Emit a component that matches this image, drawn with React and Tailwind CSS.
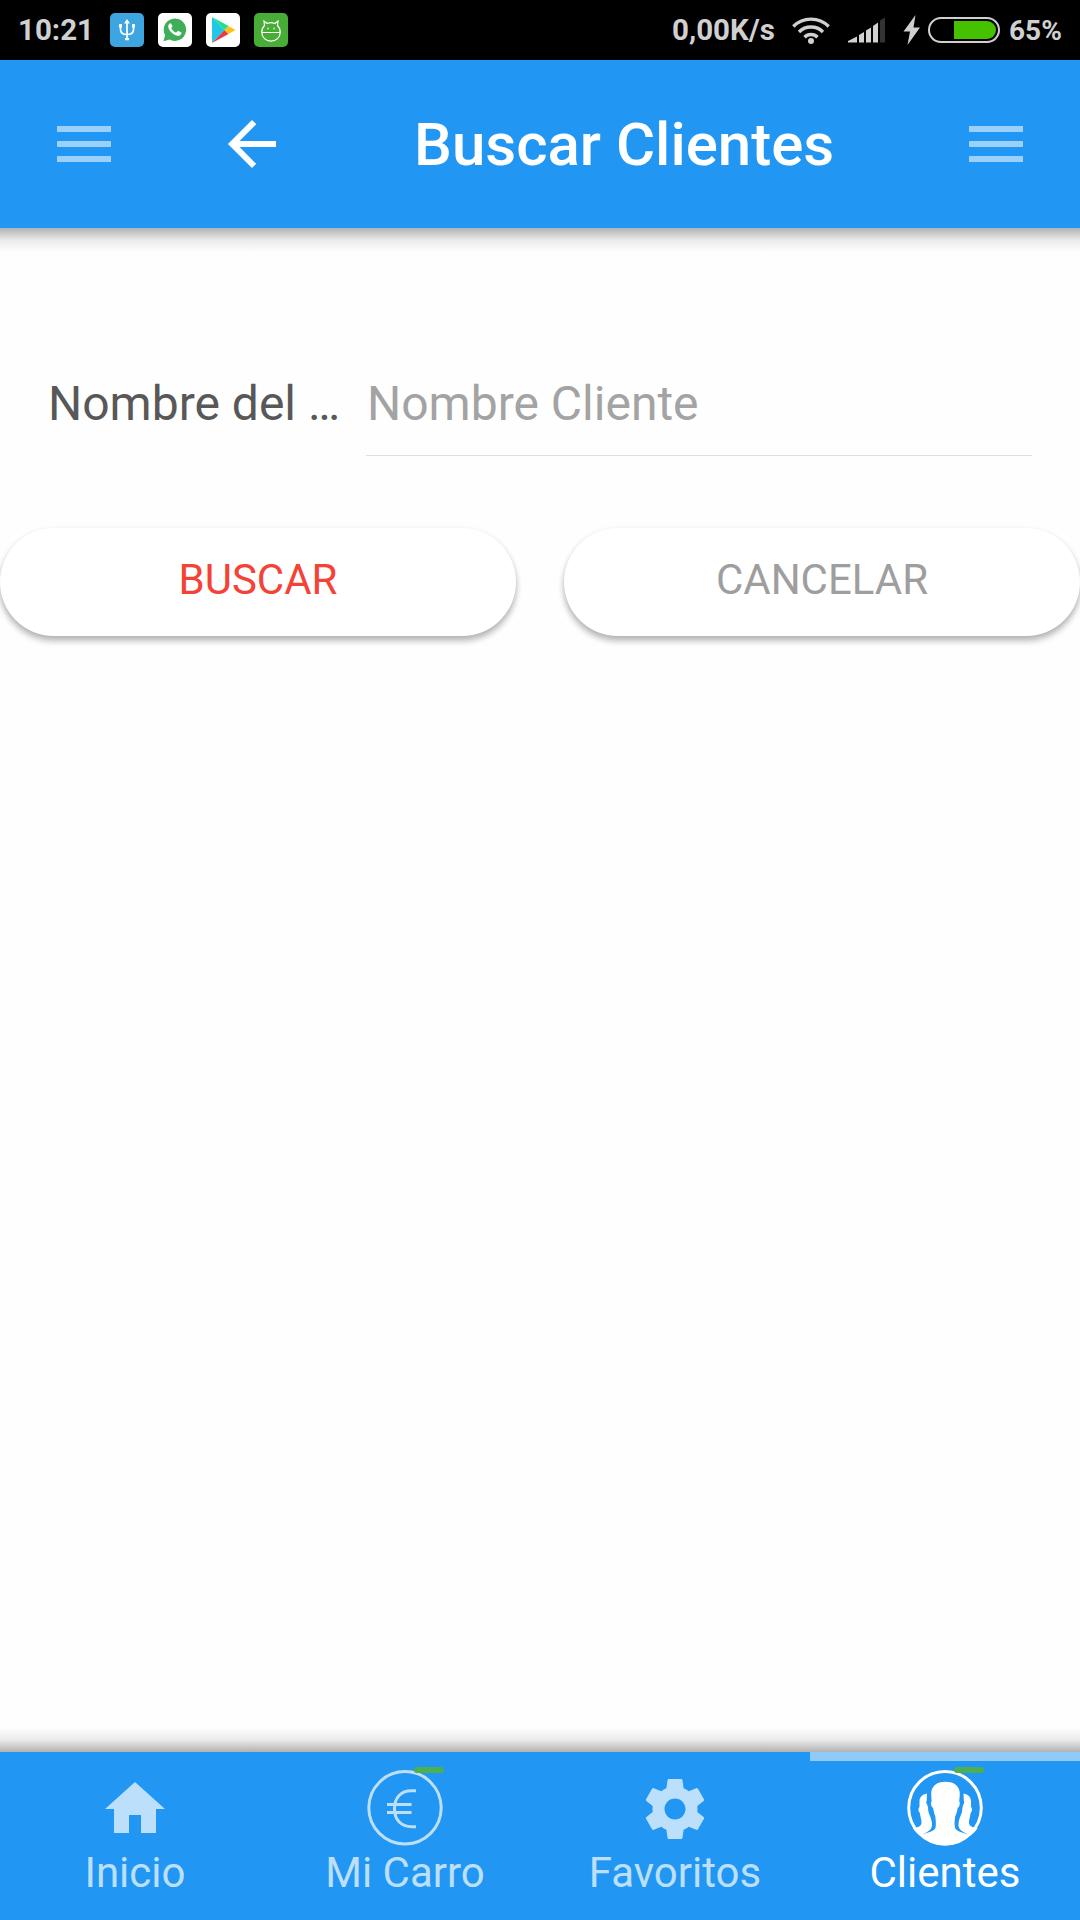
import React, { useState } from 'react';

const ROBOTO = "font-['Roboto',sans-serif]";

const StatusBar = () => (
  <div className="h-[60px] bg-black flex items-center justify-between pl-[18px] pr-[19px] text-[#d0d0d0] text-[29.5px] font-bold">
    <div className="flex items-center">
      <span className="w-[92px] leading-none pt-px">10:21</span>

      {/* Notification icons */}
      <div className="flex items-center gap-[14px]">
        <svg className="w-[34px] h-[34px]" viewBox="0 0 34 34" fill="none" stroke="#fff" strokeWidth="1.7">
          <rect width="34" height="34" rx="5" fill="#3da5e0" stroke="none" />
          <path d="M17 9v17M10.500 13v3.500c0 3.500 3 5 6.500 5s6.500-1.500 6.500-5V13" />
          <path d="M17 6l3 4.500h-6zM9 11h3v3.500H9zM22 11h3v3.500h-3zM15 25h4v2.300h-4z" fill="#fff" stroke="none" />
        </svg>
        <svg className="w-[34px] h-[34px]" viewBox="0 0 34 34">
          <rect width="34" height="34" rx="5" fill="#fff" />
          <path d="M5.500 28.300l1.600-6.200A11.200 11.200 0 1 1 11.500 26.500z" fill="#3fae5a" />
          <path d="M12.700 10.200c-.6-.1-2.700 1-2.500 3.400.4 4.400 5.800 9.300 10.200 9.300 1.800 0 3.300-1.700 3-3.300l-3.400-1.800c-.7.3-1.200 1.800-1.900 1.800-2-.6-4.200-2.700-4.800-4.600.1-.7 1.300-1.200 1.200-1.900z" fill="#fff" />
        </svg>
        <svg className="w-[34px] h-[34px]" viewBox="0 0 34 34">
          <rect width="34" height="34" rx="5" fill="#fff" />
          <path d="M6 4v26L18.500 17z" fill="#1fc8e8" />
          <path d="M6 4l12.500 13 4-4z" fill="#1fe08a" />
          <path d="M6 30l12.500-13 4 4z" fill="#e8394a" />
          <path d="M22.500 13l7 4-7 4-4-4z" fill="#fcc21b" />
        </svg>
        <svg className="w-[34px] h-[34px]" viewBox="0 0 34 34" fill="none" stroke="#fff" strokeWidth="1.200">
          <rect width="34" height="34" rx="5" fill="#48ad36" stroke="none" />
          <path d="M10.500 12.500L10 8l3.200 2.500a10 10 0 0 1 7.600 0L24 8l-.5 4.500c2 2 2.900 4.500 2.700 7a9.200 8.700 0 0 1-18.400 0c-.2-2.500.7-5 2.700-7zM8 19.500h18" />
          <path d="M13.300 15.500h1.300M19.400 15.500h1.300" strokeWidth="1.600" />
        </svg>
      </div>
    </div>

    <div className="flex items-center">
      <span className="w-[119px] leading-none whitespace-nowrap pt-px">0,00K/s</span>
      <svg className="w-[40px] h-[30px]" viewBox="0 0 40 30" fill="none" stroke="#d0d0d0" strokeWidth="3.400">
        <path d="M2.300 11.500a25 25 0 0 1 35.400 0M8 17a17 17 0 0 1 24 0M13.500 22.200a9.200 9.200 0 0 1 13 0" />
        <circle cx="20" cy="26" r="3" fill="#d0d0d0" stroke="none" />
      </svg>
      <svg className="ml-[17px] w-[38px] h-[26px]" viewBox="0 0 38 26" fill="#d0d0d0">
        <path d="M0 25.500v-1.500l9-4.500v6zM11 25.500v-7.500l5-3v10.500zM18 25.500V13.500l5-3v15zM25 25.500V9l5-3.500v20z" />
        <path d="M32 25.500V3.500l5-3v25z" fill="#333" />
      </svg>
      <svg className="ml-[17px] w-[18px] h-[30px]" viewBox="0 0 18 30" fill="#d0d0d0">
        <path d="M12.500 0L.5 16.500h6.500L4.500 30l12.500-17.500h-6.500z" />
      </svg>
      <div className="ml-[7px] w-[72px] h-[26px] rounded-full border-2 border-[#d0d0d0] p-0.5 flex justify-end">
        <div className="w-[42px] h-full bg-[#46c100] rounded-r-full" />
      </div>
      <span className="ml-[9px] w-[52px] leading-none text-[28px] pt-px">65%</span>
    </div>
  </div>
);

const MenuIcon = () => (
  <svg className="w-[72px] h-[72px] text-white/55" viewBox="0 0 512 512" fill="currentColor">
    <path d="M64 384h384v-42.666H64V384zm0-106.666h384v-42.667H64v42.667zM64 128v42.665h384V128H64z" />
  </svg>
);

const Header = () => (
  <header className="h-[168px] bg-[#2196f3] text-white flex items-center px-12">
    <button><MenuIcon /></button>
    <button className="ml-24">
      <svg className="w-[72px] h-[72px]" viewBox="0 0 512 512" fill="currentColor">
        <path d="M427 234.625H167.296l119.702-119.702L256 85 85 256l171 171 29.922-29.924-118.626-119.701H427v-42.750z" />
      </svg>
    </button>
    <h1 className="flex-1 pl-[126px] pt-0.5 text-[60px] leading-none font-medium whitespace-nowrap">Buscar Clientes</h1>
    <button><MenuIcon /></button>
  </header>
);

const HomeIcon = () => (
  <svg className="w-[72px] h-[72px] mt-0.5" viewBox="0 0 24 24" fill="currentColor">
    <path d="M10 20v-6h4v6h5v-8h3L12 3 2 12h3v8z" />
  </svg>
);

const EuroIcon = () => (
  <svg className="w-[76px] h-[76px]" viewBox="0 0 76 76" fill="none" stroke="currentColor" strokeWidth="3">
    <circle cx="38" cy="37.800" r="36.200" />
    <path d="M49 20.700h-4.500c-10.500 0-17 7-17 18s6.500 18 17 18H49M20 34.600h24.500M20 42.600h24.500" />
  </svg>
);

const SettingsIcon = () => (
  <svg className="w-[72px] h-[72px] mt-0.5" viewBox="0 0 24 24" fill="currentColor">
    <path d="M19.430 12.980c.04-.32.07-.64.07-.98s-.03-.66-.07-.98l2.110-1.650c.19-.15.24-.42.12-.64l-2-3.460c-.12-.22-.39-.3-.61-.22l-2.490 1c-.52-.4-1.080-.73-1.690-.98l-.38-2.650C14.460 2.180 14.250 2 14 2h-4c-.25 0-.46.18-.49.42l-.38 2.650c-.61.25-1.170.59-1.690.98l-2.490-1c-.23-.09-.49 0-.61.22l-2 3.460c-.13.22-.07.49.12.64l2.110 1.650c-.04.32-.07.65-.07.98s.03.66.07.98l-2.110 1.650c-.19.15-.24.42-.12.64l2 3.460c.12.22.39.3.61.22l2.490-1c.52.4 1.080.73 1.690.98l.38 2.650c.03.24.24.42.49.42h4c.25 0 .46-.18.49-.42l.38-2.650c.61-.25 1.170-.59 1.690-.98l2.490 1c.23.09.49 0 .61-.22l2-3.460c.12-.22.07-.49-.12-.64l-2.110-1.650zM12 15.500c-1.930 0-3.500-1.570-3.500-3.500s1.570-3.500 3.500-3.500 3.500 1.570 3.500 3.500-1.570 3.500-3.500 3.500z" />
  </svg>
);

// left person of the group, mirrored for the right one
const SIDE_PERSON = 'M20 23.500C15 24.500 12.700 27 12.500 31v6c-1.500.8-1.200 5 .2 5.500L14 49c1.200 4 .5 7.500-4.500 8.500L6 58c1.500 3 4.500 5.800 7.500 7.500 5.500-2.800 12.300-5 11.500-12-.4-4.500-2-7.500-3.200-10.500-1-3-.3-5.500-1.500-8-1.300-2-1.200-3.500-.6-4.500z';

const ContactsIcon = () => (
  <svg className="w-[76px] h-[76px]" viewBox="0 0 76 76" fill="currentColor">
    <circle cx="38" cy="37.800" r="36.300" fill="none" stroke="currentColor" strokeWidth="3" />
    <path d="M38.500 11.800c-9 0-14.300 4.500-14.300 12 0 3 .4 5 .4 7.500-1.200 1.500-.4 6 1.500 6.500.6 4 1.300 6.500 2.200 8.500.4 4.500 1 8 .2 11.500-1.500 4.200-9 4.700-15 7.700C19 71 28 75.500 38 75.500s19-4.500 24.500-10c-6-3-13-3.500-14.500-7.700-.8-3.500-.4-7 .2-11.500 1-2 2-4.500 2.500-8.500 2-.5 2.700-5 1.500-6.500.2-2.500.6-4.500.6-7.500 0-7.500-5.300-12-14.300-12z" />
    <path d={SIDE_PERSON} />
    <path d={SIDE_PERSON} transform="translate(76.500 0) scale(-1 1)" />
  </svg>
);

const Footer = ({ active, setActive }) => {
  const tabs = [
    { id: 'inicio', title: 'Inicio', icon: <HomeIcon /> },
    { id: 'carro', title: 'Mi Carro', icon: <EuroIcon />, badge: true },
    { id: 'favoritos', title: 'Favoritos', icon: <SettingsIcon /> },
    { id: 'clientes', title: 'Clientes', icon: <ContactsIcon />, badge: true }
  ];

  return (
    <nav className="h-[168px] bg-[#2196f3] grid grid-cols-4">
      {tabs.map(tab => (
        <button
          key={tab.id}
          onClick={() => setActive(tab.id)}
          className={`flex flex-col items-center border-t-[9px] ${active === tab.id ? 'border-[#90caf9] text-white' : 'border-transparent text-[#bce0fb]'}`}
        >
          <span className="relative h-[76px] mt-[9px] flex items-center justify-center">
            {tab.icon}
            {tab.badge && <span className="absolute -top-[3px] right-[-1px] w-[30px] h-[6px] rounded-sm bg-[#4caf50]" />}
          </span>
          <span className="mt-[2px] text-[42px] leading-[50px]">{tab.title}</span>
        </button>
      ))}
    </nav>
  );
};

const App = () => {
  const [active, setActive] = useState('clientes');
  const [name, setName] = useState('');

  return (
    <div className={`w-[1080px] h-[1920px] bg-white flex flex-col overflow-hidden ${ROBOTO}`}>
      <StatusBar />
      <Header />

      <main className="flex-1 flex flex-col bg-[#fefefe]">
        <div className="h-6 bg-linear-to-b from-black/30 via-black/8 to-transparent" />

        {/* Search field */}
        <div className="mt-[84px] ml-12 mr-12 flex h-[120px]">
          <label className="w-[294px] mr-6 pt-[40px] text-[48px] leading-[56px] text-[#585858] whitespace-nowrap">Nombre del …</label>
          <div className="flex-1 border-b border-[#dedede]">
            <input
              value={name}
              onChange={e => setName(e.target.value)}
              placeholder="Nombre Cliente"
              className="w-full mt-[40px] h-[56px] pl-px text-[48px] outline-none placeholder:text-[#a3a3a3]"
            />
          </div>
        </div>

        <div className="mt-[72px] grid grid-cols-2 gap-12">
          <button className="h-[108px] pb-1.5 rounded-full bg-white text-[42px] text-[#f44336] shadow-[0_6px_6px_0_rgba(0,0,0,0.14),0_3px_6px_0_rgba(0,0,0,0.2)]">BUSCAR</button>
          <button className="h-[108px] pb-1.5 rounded-full bg-white text-[42px] text-[#9e9e9e] shadow-[0_6px_6px_0_rgba(0,0,0,0.14),0_3px_6px_0_rgba(0,0,0,0.2)]">CANCELAR</button>
        </div>

        <div className="mt-auto h-6 bg-linear-to-t from-black/30 via-black/8 to-transparent" />
      </main>

      <Footer active={active} setActive={setActive} />
    </div>
  );
};

export default App;
